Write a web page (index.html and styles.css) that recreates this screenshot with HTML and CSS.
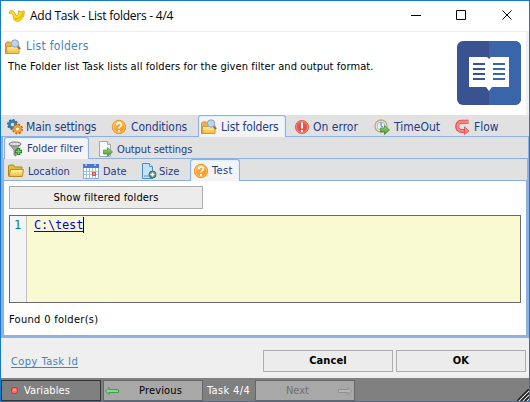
FILE: index.html
```html
<!DOCTYPE html>
<html lang="en">
<head>
<meta charset="utf-8">
<title>Add Task - List folders - 4/4</title>
<link rel="stylesheet" href="styles.css">
</head>
<body>
<svg width="0" height="0" class="defs">
  <defs>
    <linearGradient id="gold" x2="0" y2="1"><stop stop-color="#fff6b8"/><stop offset="1" stop-color="#f0bc32"/></linearGradient>
    <linearGradient id="orange" x2="1" y2="1"><stop stop-color="#ffbd55"/><stop offset="1" stop-color="#f58a12"/></linearGradient>
    <linearGradient id="green" x2="0" y2="1"><stop stop-color="#a9dd82"/><stop offset="1" stop-color="#3f8f2a"/></linearGradient>
    <symbol id="search-folder" viewBox="0 0 16 16">
      <path d="M.5 4.500 1.500 3h4l1 1.500h6v10H.5z" fill="#e6b45c" stroke="#c98f38"/>
      <path d="M1.500 7.500h5l1.500-1h6v8h-12z" fill="url(#gold)" stroke="#d29b3a"/>
      <path d="m12.500 7.500 2.700 2.500" stroke="#a96a36" stroke-width="2"/>
      <circle cx="10" cy="4.500" r="3.700" fill="#bcd5ee" stroke="#8ba4bf"/>
    </symbol>
    <symbol id="question" viewBox="0 0 16 16">
      <circle cx="8" cy="8" r="6.700" fill="url(#orange)" stroke="#f49420"/>
      <circle cx="8" cy="8" r="5.600" fill="none" stroke="#ffd28a" stroke-width=".7"/>
      <path d="M5.600 6.200C5.600 3 10.600 3.200 10.400 6 10.300 7.700 8 7.700 8 9.500" fill="none" stroke="#fff" stroke-width="1.700"/>
      <path d="M7.100 11h1.900v1.700H7.100z" fill="#fff"/>
    </symbol>
  </defs>
</svg>
<div class="window">
  <header class="titlebar">
    <svg class="logo" width="16" height="12" viewBox="0 0 16 12"><path d="M.5 1.500C2.500-.2 5 .5 6 3.500L7.500 6C9.500 5.500 10 3 9.300.8L12 1.800l3.200-1C15.800 5 13.500 10.500 9 11.300 5.500 11.800 4.300 9 4 5.500 3.700 3 2.500 3 .5 3.500z" fill="#ffdf12" stroke="#c4a13a" stroke-width=".8"/><path d="M5.500 8.500c3 1.500 7-.5 8.500-6" fill="none" stroke="#ebb900" stroke-width="1.500"/></svg>
    <span class="title">Add Task - List folders - 4/4</span>
    <svg class="controls" width="104" height="12" viewBox="0 0 104 12" fill="none" stroke="#000"><path d="M0 5.500h10M45.500.5h9v9h-9zM91.500.5l9 9M100.500.5l-9 9"/></svg>
  </header>
  <section class="intro">
    <div class="copy">
      <div class="heading"><svg width="16" height="16"><use href="#search-folder"/></svg><span>List folders</span></div>
      <p>The Folder list Task lists all folders for the given filter and output format.</p>
    </div>
    <svg class="book" width="64" height="64" viewBox="0 0 64 64"><rect width="64" height="64" rx="6" fill="#3a5290"/><path d="M32 0h26a6 6 0 0 1 6 6v52a6 6 0 0 1-6 6H32z" fill="#3a65a8"/><path d="M12 16h18l2 2 2-2h18v30H35l-3 4-3-4H12z" fill="#fff"/><path d="M16 23h12M16 28h12M16 33h12M16 38h12" stroke="#3a5290" stroke-width="2"/><path d="M36 23h12M36 28h12M36 33h12M36 38h12" stroke="#3a65a8" stroke-width="2"/></svg>
  </section>
  <nav class="tabs main">
    <div class="tab t-main"><svg width="16" height="16" viewBox="0 0 16 16"><circle cx="5.500" cy="5.500" r="3.200" fill="none" stroke="#2e7fba" stroke-width="3"/><circle cx="5.500" cy="5.500" r="4.800" fill="none" stroke="#2e6fa5" stroke-width="1.500" stroke-dasharray="2 1.700"/><circle cx="10.500" cy="10" r="3" fill="#fff" stroke="#f39a29" stroke-width="3"/><circle cx="10.500" cy="10" r="4.700" fill="none" stroke="#c66b20" stroke-width="1.500" stroke-dasharray="2 1.700"/></svg><span>Main settings</span></div>
    <div class="tab t-cond"><svg width="16" height="16"><use href="#question"/></svg><span>Conditions</span></div>
    <div class="tab t-list active"><svg width="16" height="16"><use href="#search-folder"/></svg><span>List folders</span></div>
    <div class="tab t-error"><svg width="16" height="16" viewBox="0 0 16 16"><circle cx="8" cy="8" r="6.600" fill="#e65348" stroke="#d86a62"/><circle cx="8" cy="8" r="5.600" fill="none" stroke="#f5a49c" stroke-width=".7"/><path d="M8 3.500v6M8 11v2" stroke="#fff" stroke-width="2"/></svg><span>On error</span></div>
    <div class="tab t-time"><svg width="16" height="16" viewBox="0 0 16 16"><circle cx="7" cy="7" r="6" fill="#e7eef4" stroke="#c3aa78" stroke-width="1.400"/><circle cx="7" cy="7" r="4" fill="none" stroke="#a6bdd1"/><path d="M7 3v4l2 1" fill="none" stroke="#587da4"/><path d="M6.500 9h4V6.500l5 4.500-5 4.500V13h-4z" fill="url(#green)" stroke="#3f812e" stroke-width=".7"/></svg><span>TimeOut</span></div>
    <div class="tab t-flow"><svg width="16" height="16" viewBox="0 0 16 16" fill="none"><path d="M13.500 2.800H6.500C.8 2.800.8 12 6.500 12H10" stroke="#d84442" stroke-width="4"/><path d="M13 2.800H6.500C1.200 2.800 1.200 12 6.500 12H10" stroke="#ff8583" stroke-width="2.400"/><path d="M9.500 7.800v7.700L14 12z" fill="#ff8583" stroke="#d84442" stroke-width=".7"/></svg><span>Flow</span></div>
  </nav>
  <nav class="tabs sub">
    <div class="tab s-filter active"><svg width="16" height="16" viewBox="0 0 16 16"><path d="M1 3l5 6v5l2 1V9l5-6z" fill="#aaa" stroke="#666" stroke-width=".7"/><ellipse cx="7" cy="3" rx="6" ry="2" fill="#ddd" stroke="#777"/><path d="M10.500 7v7M7 10.500h7" stroke="#217a20" stroke-width="3.400"/><path d="M10.500 7.700v5.600M7.700 10.500h5.600" stroke="#75d15a" stroke-width="1.600"/></svg><span>Folder filter</span></div>
    <div class="tab s-output"><svg width="16" height="16" viewBox="0 0 16 16"><path d="M1.500.5h8l3 3v12h-11z" fill="#f8f8f8" stroke="#aaa"/><path d="M9.500.5v3h3" fill="#ddd" stroke="#aaa"/><path d="M5.500 9h4V6.500L14.500 11l-5 4.500V13h-4z" fill="url(#green)" stroke="#4d8c3c" stroke-width=".7"/></svg><span>Output settings</span></div>
  </nav>
  <nav class="tabs sub third">
    <div class="tab r-loc"><svg width="16" height="16" viewBox="0 0 16 16"><path d="M.5 13V3l1-1h4l1.500 2h7v9z" fill="#e3bb34" stroke="#b48918"/><path d="M1 13.500 2.500 6.500h13l-1.200 7z" fill="url(#gold)" stroke="#ba911e"/></svg><span>Location</span></div>
    <div class="tab r-date"><svg width="16" height="16" viewBox="0 0 16 16"><path d="M.5 1.500h15v14H.5z" fill="#fff" stroke="#8da9dc"/><path d="M0 1h16v4H0z" fill="#4779ce"/><path d="M3 0v3M12 0v3" stroke="#b8d2ff" stroke-width="1.500"/><path d="M3.500 5v10M6.500 5v10M9.500 5v10M12.500 5v10M1 8.500h14M1 11.500h14" stroke="#a4bfe8"/><path d="M9.500 9.500h3v3h-3z" fill="#f69b7d" stroke="#d4512e"/></svg><span>Date</span></div>
    <div class="tab r-size"><svg width="16" height="16" viewBox="0 0 16 16"><path d="M1.500.5h7l3 3v12h-10z" fill="#c5e2fa" stroke="#4a8ccc"/><path d="M8.500.5v3h3M3 13h8" fill="#fff" stroke="#5696d1"/><circle cx="11.500" cy="11.500" r="3.500" fill="#5f9e76" stroke="#2e7068"/><path d="M11.500 9.500v4M9.500 11.500h4" stroke="#fff" stroke-width="1.300"/></svg><span>Size</span></div>
    <div class="tab r-test active"><svg width="16" height="16"><use href="#question"/></svg><span>Test</span></div>
  </nav>
  <main class="panel">
    <button class="show"><span>Show filtered folders</span></button>
    <div class="editor"><div class="gutter">1</div><div class="code"><span>C:\test</span></div></div>
    <div class="found">Found 0 folder(s)</div>
  </main>
  <section class="actions"><a>Copy Task Id</a><button class="cancel"><span>Cancel</span></button><button class="ok"><span>OK</span></button></section>
  <footer class="status">
    <div class="variables"><svg width="7" height="7" viewBox="0 0 7 7"><rect x=".5" y=".5" width="6" height="6" rx="2" fill="#ff6965" stroke="#d12e2d"/><path d="M2 3h3" stroke="#ffc0bb"/></svg><span>Variables</span></div>
    <div class="previous"><svg width="14" height="8" viewBox="0 0 14 8"><path d="M.5 4 4 .5v2h9.500v3H4v2z" fill="#8bd68b" stroke="#359647" stroke-width=".9"/></svg><span>Previous</span></div>
    <span class="count">Task 4/4</span>
    <div class="next"><span>Next</span><svg width="14" height="8" viewBox="0 0 14 8"><path d="M13.500 4 10 .5v2H.5v3H10v2z" fill="#b7b7b7" stroke="#8d8d8d" stroke-width=".9"/></svg></div>
    <svg class="grip" width="12" height="12" viewBox="0 0 12 12"><path d="M0 12 12 0M4 12l8-8M8 12l4-4" stroke="#222" stroke-width="1.500"/><path d="M2 12 12 2M6 12l6-6M10 12l2-2" stroke="#ddd"/></svg>
  </footer>
</div>
</body>
</html>
```
FILE: styles.css
```css
* { box-sizing: border-box; }
body { margin: 0; font: 11px/14px "DejaVu Sans Condensed", "DejaVu Sans", sans-serif; color: #000; }
.defs { position: absolute; }
svg { display: block; flex: none; }
span { white-space: nowrap; }
.window { width: 530px; height: 402px; border: 1px solid #1979ca; background: #efefef; overflow: hidden; }
.titlebar { height: 31px; background: #fff; border-bottom: 1px solid #efefef; display: flex; align-items: center; padding: 0 15px 0 8px; }
.title { font: 12px/16px "Open Sans", sans-serif; margin-left: 5px; flex: 1; letter-spacing: -.25px; }
.controls { margin-right: -1px; }
.intro { height: 83px; margin-right: 3px; background: #fff; display: flex; justify-content: space-between; padding: 9px 5px 0 4px; }
.heading { display: flex; gap: 5px; align-items: center; height: 16px; color: #4384bb; font-size: 12px; margin-top: -2px; letter-spacing: .28px; }
.heading span { margin-top: -2px; }
p { margin: 5px 0 0 3px; white-space: nowrap; letter-spacing: .095px; }
.tabs { height: 22px; display: flex; background: #e1e1e1; border-bottom: 1px solid #8fb0e3; color: #1e3c87; }
.tabs.main { font-size: 12px; }
.tabs.sub { border-left: 2px solid #8fb0e3; border-right: 1px solid #8fb0e3; }
.tabs.third { border-left-width: 3px; border-right-width: 2px; }
.tab { display: flex; align-items: center; gap: 4px; padding-top: 3px; }
.sub .tab span { position: relative; top: 1px; }
.sub .tab.active span { top: 0; }
.tab.active { background: #f4f4f4; border: 1px solid #8fb0e3; border-bottom: 0; border-radius: 3px 3px 0 0; box-shadow: inset 1px 1px #dff0ff, inset -1px 0 #dff0ff; height: 22px; padding-top: 1px; }
.t-main { width: 105px; padding-left: 6px; gap: 3px; letter-spacing: -.15px; }
.t-cond { width: 92px; padding-left: 5px; letter-spacing: -.1px; }
.t-list { width: 88px; padding-left: 2px; letter-spacing: -.15px; }
.t-error { width: 87px; padding-left: 8px; gap: 3px; }
.t-time { width: 77px; padding-left: 1px; }
.t-flow { padding-left: 5px; gap: 3px; }
.s-filter { width: 85px; margin-left: 1px; padding-left: 3px; gap: 3px; letter-spacing: -.05px; }
.s-output { padding-left: 9px; gap: 3px; letter-spacing: -.12px; }
.r-loc { width: 75px; padding-left: 4px; }
.r-date { width: 58px; padding-left: 4px; }
.r-size { width: 53px; padding-left: 4px; gap: 2px; }
.r-test { width: 50px; padding-left: 2px; gap: 3px; letter-spacing: .4px; }
.panel { height: 157px; background: #fff; border: 3px solid #8fb0e3; border-top: 0; padding: 5px 5px 0; }
button { font: inherit; color: #000; background: #ececec; border: 1px solid #adadad; padding: 0; display: block; }
.show { width: 194px; height: 23px; letter-spacing: .15px; }
.editor { height: 88px; margin-top: 6px; border: 1px solid #696969; display: flex; background: #fafad2; font: 12px/16px "DejaVu Sans Mono", monospace; padding: 0; }
.gutter { width: 17px; background: #f4f4f4; border-right: 1px solid #c0c0c0; color: #008080; padding: 1px 0 0 4px; }
.code { color: #0000f0; padding: 1px 0 0 7px; }
.code span { display: block; height: 16px; border-right: 1px solid #000; text-decoration: underline; text-underline-offset: 2px; letter-spacing: -.2px; }
.found { margin-top: 10px; letter-spacing: .3px; }
.actions { height: 40px; display: flex; padding: 12px 3px 0 10px; }
.actions a { color: #4384bb; flex: 1; text-decoration: underline; text-underline-offset: 2px; padding-top: 5px; letter-spacing: .45px; }
.actions button { width: 130px; height: 22px; font-weight: bold; letter-spacing: .1px; }
.actions .cancel { margin-right: 3px; }
.status { height: 23px; background: #808080; display: flex; padding-top: 2px; }
.status > div { height: 21px; border: 1px solid #666; background: #a8a8a8; display: flex; align-items: center; width: 100px; }
.status .variables { background: #808080; color: #fff; border-color: #333; padding-left: 9px; gap: 6px; letter-spacing: .1px; }
.status .previous { margin-left: 2px; padding-left: 1px; gap: 20px; letter-spacing: .15px; }
.status .count { width: 52px; color: #fff; padding: 4px 0 0 4px; letter-spacing: .35px; }
.status .next { color: #707070; justify-content: flex-end; gap: 29px; padding-right: 2px; }
.grip { margin: 9px 0 0 auto; }
```
